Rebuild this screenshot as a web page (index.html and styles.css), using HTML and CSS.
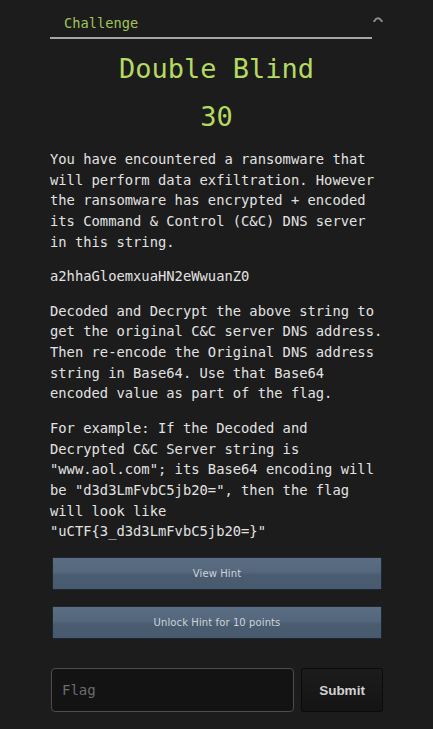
FILE: index.html
```html
<!DOCTYPE html>
<html lang="en">
<head>
<meta charset="utf-8">
<title>Double Blind</title>
<link rel="stylesheet" href="styles.css">
</head>
<body>
<div class="modal">
  <div class="modal-header">
    <div class="tabs">
      <span class="tab-label">Challenge</span>
    </div>
    <button class="close" aria-label="Close">
      <svg width="10" height="6" viewBox="0 0 10 6"><path d="M1.2 5.2 Q5 -0.6 8.8 5.2" fill="none" stroke="#8c8c8c" stroke-width="2" stroke-linecap="round"/></svg>
    </button>
  </div>
  <h2 class="title">Double Blind</h2>
  <h3 class="value">30</h3>
  <div class="description">
    <p>You have encountered a ransomware that will perform data exfiltration. However the ransomware has encrypted + encoded its Command &amp; Control (C&amp;C) DNS server in this string.</p>
    <p>a2hhaGloemxuaHN2eWwuanZ0</p>
    <p>Decoded and Decrypt the above string to get the original C&amp;C server DNS address. Then re-encode the Original DNS address string in Base64. Use that Base64 encoded value as part of the flag.</p>
    <p>For example: If the Decoded and Decrypted C&amp;C Server string is "www.aol.com"; its Base64 encoding will be "d3d3LmFvbC5jb20=", then the flag will look like "uCTF{3_d3d3LmFvbC5jb20=}"</p>
  </div>
  <div class="hints">
    <button class="hint-btn">View Hint</button>
    <button class="hint-btn">Unlock Hint for 10 points</button>
  </div>
  <form class="submit-row" onsubmit="return false">
    <input class="flag-input" type="text" placeholder="Flag">
    <button class="submit-btn" type="submit">Submit</button>
  </form>
</div>
</body>
</html>
```

FILE: styles.css
```css
html, body {
  margin: 0;
  padding: 0;
  background: #1c1c1c;
}

body {
  font-family: "DejaVu Sans Mono", monospace;
  color: #e2e2e2;
}

.modal {
  width: 333px;
  margin: 0 auto;
}

.modal-header {
  display: flex;
  align-items: flex-start;
}

.tabs {
  flex: 0 0 322px;
  padding: 16px 0 7px 14px;
  box-sizing: border-box;
  border-bottom: 2px solid #a6a6a6;
}

.tab-label {
  display: block;
  font-size: 13.7px;
  line-height: 14px;
  color: #a2c35a;
}

.close {
  margin: 16px 0 0 1px;
  padding: 0;
  border: 0;
  background: none;
  width: 10px;
  height: 6px;
  display: flex;
}

.title {
  margin: 14px 0 0;
  font-size: 27px;
  line-height: 32px;
  font-weight: normal;
  text-align: center;
  color: #b5da62;
}

.value {
  margin: 16px 0 0;
  font-size: 27px;
  line-height: 32px;
  font-weight: normal;
  text-align: center;
  color: #b5da62;
}

.description {
  margin-top: 16px;
  font-size: 13.8px;
  line-height: 1.5;
}

.description p {
  margin: 0 0 13.8px;
}

.description p:last-child {
  margin-bottom: 0;
}

.hints {
  margin: 15px 1px 0 2px;
  display: flex;
  flex-direction: column;
  gap: 16px;
}

.hint-btn {
  height: 33px;
  margin: 0;
  padding: 0;
  border: 1px solid #1d2631;
  border-radius: 1px;
  background: linear-gradient(#5a6d83 0%, #54677c 45%, #4a5c70 55%, #475a6e 100%);
  color: #cdd3da;
  font-family: "DejaVu Sans", sans-serif;
  font-size: 10px;
  letter-spacing: 0.1px;
  text-align: center;
}

.submit-row {
  margin: 29px 0 0;
  padding-left: 1px;
  display: flex;
  gap: 7px;
}

.flag-input {
  flex: 1;
  min-width: 0;
  height: 44px;
  box-sizing: border-box;
  margin: 0;
  padding: 0 10px;
  border: 1px solid #4d4d4d;
  border-radius: 4px;
  background: #131313;
  color: #ddd;
  font-family: "DejaVu Sans Mono", monospace;
  font-size: 14px;
}

.flag-input::placeholder {
  color: #6c6c6c;
}

.submit-btn {
  width: 82px;
  height: 44px;
  box-sizing: border-box;
  margin: 0;
  padding: 0;
  border: 1px solid #0b0b0b;
  border-radius: 2px;
  background: linear-gradient(#1c1c1c, #141414);
  color: #d2d2d2;
  font-family: "Liberation Sans", Arial, sans-serif;
  font-weight: bold;
  font-size: 13.5px;
}
```
